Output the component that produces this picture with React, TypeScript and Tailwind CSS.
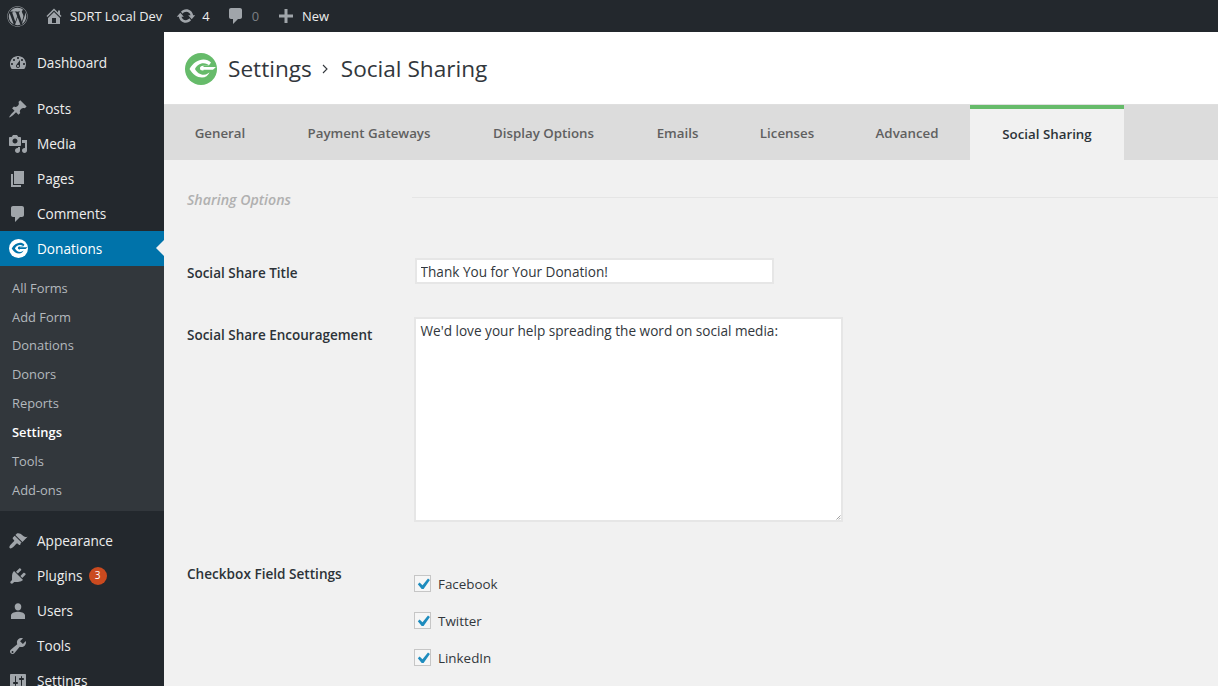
import { FaWordpress } from "react-icons/fa";
import type { ReactNode } from "react";

const sans = "font-['Open_Sans','Noto_Sans',sans-serif]";

const icons: Record<string, ReactNode> = {
  dashboard: <path d="M3.76 16h12.48c1.1-1.37 1.76-3.11 1.76-5 0-4.42-3.58-8-8-8s-8 3.58-8 8c0 1.89.66 3.63 1.76 5zM10 4c.55 0 1 .45 1 1s-.45 1-1 1-1-.45-1-1 .45-1 1-1zM6 6c.55 0 1 .45 1 1s-.45 1-1 1-1-.45-1-1 .45-1 1-1zm8 0c.55 0 1 .45 1 1s-.45 1-1 1-1-.45-1-1 .45-1 1-1zm-5.37 5.55L12 7v6c0 1.1-.9 2-2 2s-2-.9-2-2c0-.57.24-1.08.63-1.45zM4 10c.55 0 1 .45 1 1s-.45 1-1 1-1-.45-1-1 .45-1 1-1zm12 0c.55 0 1 .45 1 1s-.45 1-1 1-1-.45-1-1 .45-1 1-1zm-5 3c0-.55-.45-1-1-1s-1 .45-1 1 .45 1 1 1 1-.45 1-1z" fillRule="evenodd" />,
  posts: <path d="M10.44 3.02l1.82-1.82 6.36 6.35-1.83 1.82c-1.05-.68-2.48-.57-3.41.36l-.75.75c-.92.93-1.04 2.35-.35 3.41l-1.83 1.82-2.41-2.41-2.8 2.79c-.42.42-3.38 2.71-3.8 2.29s1.86-3.39 2.28-3.81l2.79-2.79L4.1 9.36l1.83-1.82c1.05.69 2.48.57 3.4-.36l.75-.75c.93-.92 1.05-2.35.36-3.41z" />,
  media: <path d="M13 11V4c0-.55-.45-1-1-1h-1.67L9 1H5L3.67 3H2c-.55 0-1 .45-1 1v7c0 .55.45 1 1 1h10c.55 0 1-.45 1-1zM7 4.5c1.38 0 2.5 1.12 2.5 2.5S8.38 9.5 7 9.5 4.5 8.38 4.5 7 5.62 4.5 7 4.5zM14 6h5v10.5c0 1.38-1.12 2.5-2.5 2.5S14 17.88 14 16.5s1.12-2.5 2.5-2.5c.17 0 .34.02.5.05V9h-3V6zm-4 8.05V13h2v3.5c0 1.38-1.12 2.5-2.5 2.5S7 17.88 7 16.5 8.12 14 9.5 14c.17 0 .34.02.5.05z" fillRule="evenodd" />,
  pages: <path d="M6 15V2h10v13H6zm-1 1h8v2H3V5h2v11z" />,
  comments: <path d="M5 2h9c1.1 0 2 .9 2 2v7c0 1.1-.9 2-2 2h-2l-5 5v-5H5c-1.1 0-2-.9-2-2V4c0-1.1.9-2 2-2z" />,
  appearance: <path d="M14.48 11.06L7.41 3.99l1.5-1.5c.5-.56 2.3-.47 3.51.32 1.21.8 1.43 1.28 2.91 2.1 1.18.64 2.45 1.26 4.23.91l-.71.71-4.37 4.53zm-.71.71L6.7 4.7 4.93 6.47c-.39.39-.39 1.02 0 1.41l1.06 1.06c.39.39.39 1.03 0 1.42-.6.6-1.43 1.31-2.21 2.09-1.79 1.79-3.09 3.65-2.12 4.62.98.97 2.84-.33 4.62-2.12.79-.78 1.5-1.61 2.09-2.21.39-.39 1.03-.39 1.42 0l1.06 1.06c.39.39 1.02.39 1.41 0l.61-2.03z" />,
  plugins: <path d="M13.11 4.36L9.87 7.6 8 5.73l3.24-3.24c.35-.34 1.05-.2 1.56.32.52.51.66 1.21.31 1.55zm-8 1.77l.91-1.12 9.01 9.01-1.19.84c-.71.71-2.63 1.16-3.82 1.16H6.14L4.9 17.26c-.59.59-1.54.59-2.12 0-.59-.58-.59-1.53 0-2.12l1.24-1.24V10c0-1.13.4-3.19 1.09-3.87zm7.26 3.97l3.24-3.24c.34-.35 1.04-.21 1.55.31.52.51.66 1.21.31 1.55l-3.24 3.25z" />,
  users: <path d="M10 9.6c-2 0-3.3-1.6-3.3-3.9C6.7 3.6 8.1 2.2 10 2.2s3.3 1.4 3.3 3.5c0 2.3-1.3 3.9-3.3 3.9zm0 1.2c2.3 0 7 1 7 3.5V18H3v-3.7c0-2.5 4.7-3.5 7-3.5z" />,
  tools: <path d="M16.68 9.77c-1.34 1.34-3.3 1.67-4.95.99l-5.41 6.52c-.99.99-2.59.99-3.58 0s-.99-2.59 0-3.57l6.52-5.42c-.68-1.65-.35-3.61.99-4.95 1.28-1.28 3.12-1.62 4.72-1.06l-2.89 2.89 2.82 2.82 2.86-2.87c.53 1.58.18 3.39-1.08 4.65zM3.81 16.69c.39.39 1.03.39 1.42 0 .38-.39.38-1.03 0-1.41-.39-.39-1.03-.39-1.42 0-.38.38-.38 1.02 0 1.41z" fillRule="evenodd" />,
  settings: <path d="M18 16V4c0-.55-.45-1-1-1H3c-.55 0-1 .45-1 1v12c0 .55.45 1 1 1h14c.55 0 1-.45 1-1zM8 11h1c.55 0 1 .45 1 1s-.45 1-1 1H8v1.5c0 .28-.22.5-.5.5s-.5-.22-.5-.5V13H6c-.55 0-1-.45-1-1s.45-1 1-1h1V5.5c0-.28.22-.5.5-.5s.5.22.5.5V11zm5-2h-1c-.55 0-1-.45-1-1s.45-1 1-1h1V5.5c0-.28.22-.5.5-.5s.5.22.5.5V7h1c.55 0 1 .45 1 1s-.45 1-1 1h-1v5.5c0 .28-.22.5-.5.5s-.5-.22-.5-.5V9z" fillRule="evenodd" />,
  home: <path d="M16 8.5l1.53 1.53-1.06 1.06L10 4.62l-6.47 6.47-1.06-1.06L10 2.5l4 4v-2h2v4zm-6-2.46l6 5.99V18H4v-5.97zM12 17v-5H8v5h4z" fillRule="evenodd" />,
  update: <path d="M10.2 3.28c3.53 0 6.43 2.61 6.92 6h2.08l-3.5 4-3.5-4h2.32c-.45-1.97-2.21-3.44-4.32-3.44-1.45 0-2.73.71-3.54 1.79L4.95 5.65c1.27-1.45 3.13-2.37 5.25-2.37zm-.4 13.44c-3.52 0-6.43-2.61-6.92-6H.8l3.5-4c1.17 1.33 2.33 2.67 3.5 4H5.48c.45 1.97 2.21 3.44 4.32 3.44 1.45 0 2.73-.71 3.54-1.79l1.71 1.98c-1.27 1.45-3.13 2.37-5.25 2.37z" />,
  plus: <path d="M8.5 3h3v5.5H17v3h-5.5V17h-3v-5.5H3v-3h5.5z" />,
};

const Dash = ({ name, className }: { name: string; className: string }) => (
  <svg viewBox="0 0 20 20" fill="currentColor" className={className}>
    {icons[name]}
  </svg>
);

const GiveLogo = ({ className, ring, inner }: { className: string; ring: string; inner: string }) => (
  <svg viewBox="0 0 32 32" className={className}>
    <circle cx="16" cy="16" r="16" fill={ring} />
    <path d="M4.5 16C8 10 13 6.5 18.5 6.5c3 0 5.5 1 7.5 3l-2.500 3.500h-5v6.500h6c-1.500 3-4 5-7.500 5-5 0-9.500-3.500-12.500-8.500z" fill={inner} />
    <path d="M10 16c1.500-3 4.500-5.700 8.500-5.700 2.500 0 4.500.9 6 2.400h-6.500c-1.800 0-3 1-3 2.500 0 1.300.9 2.300 2.500 2.300h8c-1.200 2.500-3.700 4.300-6.800 4.300-3.800 0-7-2.500-8.700-5.800z" fill={ring} />
    <path d="M16 14h14.300c.4 0 .5.3.2.6l-2.600 2.200H17.500c-1.200 0-2-.6-2-1.500 0-.5.2-.9.5-1.300z" fill={inner} />
  </svg>
);

const MenuItem = ({ icon, label, badge }: { icon: string; label: string; badge?: string }) => (
  <div className="flex h-[35px] items-center text-[#eeeeee]">
    <Dash name={icon} className="ml-[8px] h-[20px] w-[20px] text-[#a0a5aa]" />
    <span className="ml-[9px] pt-[2px] text-[13.6px]">{label}</span>
    {badge && (
      <span className="ml-[6px] flex h-[18px] w-[18px] items-center justify-center rounded-full bg-[#ca4a1f] text-[10px] text-white">{badge}</span>
    )}
  </div>
);

const tabs = [
  { label: "General", width: "w-[112px]" },
  { label: "Payment Gateways", width: "w-[186px]" },
  { label: "Display Options", width: "w-[163px]" },
  { label: "Emails", width: "w-[105px]" },
  { label: "Licenses", width: "w-[114px]" },
  { label: "Advanced", width: "w-[126px]" },
];

const subItems = ["All Forms", "Add Form", "Donations", "Donors", "Reports", "Settings", "Tools", "Add-ons"];

const Check = ({ label }: { label: string }) => (
  <label className="flex h-[37px] items-center">
    <span className="mb-[2px] flex h-[17px] w-[17px] items-center justify-center border border-[#c6c6c6] bg-[#f6f6f6]">
      <svg viewBox="0 0 20 20" className="h-[20px] w-[20px] shrink-0" fill="#1e8cbe">
        <path d="M15 4.6l1.9 1.3-6.3 9H8.7l-3.900-4.600 1.800-1.700 2.900 2.700z" />
      </svg>
    </span>
    <span className="ml-[7px] text-[13.4px] text-[#32373c]">{label}</span>
  </label>
);

export default function App() {
  return (
    <div className={`flex h-[686px] flex-col overflow-hidden bg-[#f1f1f1] ${sans}`}>
      {/* admin bar */}
      <div className="flex h-[32px] shrink-0 items-center bg-[#23282d] text-[12.9px] text-[#eeeeee]">
        <FaWordpress className="ml-[7px] h-[21px] w-[21px] text-[#a0a5aa]" />
        <Dash name="home" className="ml-[16px] h-[20px] w-[20px] text-[#a0a5aa]" />
        <span className="ml-[6px] pt-[2px]">SDRT Local Dev</span>
        <Dash name="update" className="ml-[14px] h-[20px] w-[20px] text-[#a0a5aa]" />
        <span className="ml-[6px] pt-[2px]">4</span>
        <Dash name="comments" className="ml-[16px] h-[20px] w-[20px] text-[#a0a5aa]" />
        <span className="ml-[6px] pt-[2px] text-[#7b7f84]">0</span>
        <Dash name="plus" className="ml-[17px] h-[20px] w-[20px] text-[#a0a5aa]" />
        <span className="ml-[6px] pt-[2px]">New</span>
      </div>

      <div className="flex min-h-0 flex-1">
        {/* sidebar */}
        <div className="w-[164px] shrink-0 bg-[#23282d] pt-[13px]">
          <MenuItem icon="dashboard" label="Dashboard" />
          <div className="h-[11px]" />
          <MenuItem icon="posts" label="Posts" />
          <MenuItem icon="media" label="Media" />
          <MenuItem icon="pages" label="Pages" />
          <MenuItem icon="comments" label="Comments" />
          <div className="relative flex h-[35px] items-center bg-[#0073aa] text-white">
            <GiveLogo className="ml-[9px] h-[19px] w-[19px]" ring="#ffffff" inner="#0073aa" />
            <span className="ml-[9px] pt-[2px] text-[13.6px]">Donations</span>
            <span className="absolute right-0 top-[9px] h-0 w-0 border-y-[8px] border-r-[8px] border-y-transparent border-r-[#f1f1f1]" />
          </div>
          <div className="flex h-[245px] flex-col bg-[#32373c] pt-[8px]">
            {subItems.map((s) => (
              <div key={s} className={`flex h-[28.86px] shrink-0 items-center pl-[12px] text-[12.9px] ${s === "Settings" ? "font-semibold text-white" : "text-[#b4b9be]"}`}>
                {s}
              </div>
            ))}
          </div>
          <div className="h-[12px]" />
          <MenuItem icon="appearance" label="Appearance" />
          <MenuItem icon="plugins" label="Plugins" badge="3" />
          <MenuItem icon="users" label="Users" />
          <MenuItem icon="tools" label="Tools" />
          <MenuItem icon="settings" label="Settings" />
        </div>

        {/* content */}
        <div className="min-w-0 flex-1">
          <div className="flex h-[72px] items-center bg-white pl-[21px] pt-[2px]">
            <GiveLogo className="h-[32px] w-[32px]" ring="#66bb6a" inner="#ffffff" />
            <span className="ml-[11px] text-[22.6px] text-[#32373c]">Settings</span>
            <svg viewBox="0 0 10 10" className="ml-[8px] h-[10px] w-[10px]" fill="none" stroke="#32373c" strokeWidth="1.1">
              <path d="M3 1 7 5 3 9" />
            </svg>
            <span className="ml-[11px] text-[22.6px] text-[#32373c]">Social Sharing</span>
          </div>

          <div className="flex h-[56px] border-t border-[#dfdfdf] bg-[#dcdcdc]">
            {tabs.map((t) => (
              <div key={t.label} className={`flex items-center justify-center pt-[3px] text-[13.3px] font-semibold text-[#606060] ${t.width}`}>
                {t.label}
              </div>
            ))}
            <div className="flex w-[154px] items-center justify-center border-t-[4px] border-[#66bb6a] bg-[#f1f1f1] text-[13.3px] font-semibold text-[#2c3338]">
              Social Sharing
            </div>
          </div>

          <div className="pl-[23px]">
            <div className="flex h-[80px] items-center">
              <span className="w-[225px] text-[14.2px] font-semibold italic text-[#b0b0b0]">Sharing Options</span>
              <div className="mt-[-5px] h-px flex-1 bg-[#e5e5e5]" />
            </div>

            <div className="mt-[18px] flex items-center">
              <span className="w-[228px] pt-[4px] text-[13.5px] font-semibold text-[#2c3338]">Social Share Title</span>
              <input readOnly value="Thank You for Your Donation!" className="h-[26px] w-[359px] border-2 border-[#e6e6e6] bg-white px-[3.5px] text-[13.6px] text-[#32373c]" />
            </div>

            <div className="mt-[33px] flex items-start">
              <span className="mt-[8px] w-[227px] text-[13.5px] font-semibold text-[#2c3338]">Social Share Encouragement</span>
              <div className="relative">
                <textarea readOnly value="We'd love your help spreading the word on social media:" className="block h-[205px] w-[429px] resize-none border-2 border-[#e6e6e6] bg-white px-[4.5px] py-[2px] text-[13.6px] text-[#32373c]" />
                <svg viewBox="0 0 6 6" className="absolute bottom-[2px] right-[2px] h-[6px] w-[6px]" stroke="#888888" strokeWidth="0.8">
                  <path d="M5.5 1.5 1.5 5.5M5.5 3.8 3.800 5.500" />
                </svg>
              </div>
            </div>

            <div className="mt-[33px] flex items-start">
              <span className="mt-[8.5px] w-[227px] text-[13.6px] font-semibold text-[#2c3338]">Checkbox Field Settings</span>
              <div className="flex flex-col pt-[11px]">
                <Check label="Facebook" />
                <Check label="Twitter" />
                <Check label="LinkedIn" />
              </div>
            </div>
          </div>
        </div>
      </div>
    </div>
  );
}
